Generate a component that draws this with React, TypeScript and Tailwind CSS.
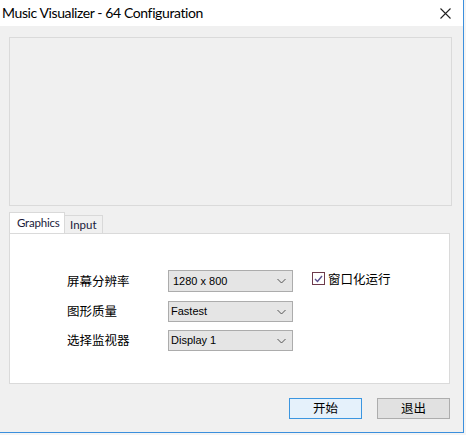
import React from "react";

const cjk = { fontFamily: '"Noto Sans CJK SC", "Noto Sans", sans-serif' };
const ui = { fontFamily: 'Lato, "Noto Sans", sans-serif' };
const tah = { fontFamily: '"Liberation Sans", Arial, sans-serif' };

function Chevron() {
  return (
    <svg width="9" height="6" viewBox="0 0 9 6" className="shrink-0">
      <polyline points="0.5,1 4.5,5 8.5,1" fill="none" stroke="#555" strokeWidth="1" />
    </svg>
  );
}

function Select({ value, h, pl }: { value: string; h: string; pl: string }) {
  return (
    <div
      className={`w-[125px] ${h} ${pl} flex items-center justify-between pr-[6px] bg-[#e5e5e5] border border-[#acacac] text-[11px] text-black`}
      style={tah}
    >
      <span>{value}</span>
      <Chevron />
    </div>
  );
}

export default function App() {
  return (
    <div className="w-[466px] h-[435px] bg-[#f4f4f4] overflow-hidden">
      <div className="w-[464px] h-[433px] border-r border-b border-[#3b8fdd] bg-[#f0f0f0] flex flex-col">
        {/* title bar */}
        <div className="h-[26px] bg-white flex items-center justify-between pl-[2px] pr-[12px] shrink-0">
          <span className="text-[14px] tracking-[-0.4px] text-black leading-none" style={ui}>
            Music Visualizer - 64 Configuration
          </span>
          <svg width="11" height="11" viewBox="0 0 11 11">
            <path d="M0.5 0.5 L10.5 10.5 M10.5 0.5 L0.5 10.5" stroke="#222" strokeWidth="1.1" fill="none" />
          </svg>
        </div>

        {/* preview panel */}
        <div className="ml-[9px] mt-[11px] w-[443px] h-[169px] border border-[#dadada] bg-[#f0f0f0] shrink-0" />

        {/* tabs */}
        <div className="ml-[9px] mt-[7px] flex items-end h-[20px] shrink-0 relative z-10">
          <div
            className="w-[56px] h-[21px] bg-white border border-b-0 border-[#d9d9d9] text-[11.5px] tracking-[-0.2px] text-[#1a1a3a] pl-[7px] pt-[1px] leading-[18px]"
            style={ui}
          >
            Graphics
          </div>
          <div
            className="w-[38px] h-[18px] bg-[#f0f0f0] border border-l-0 border-b-0 border-[#d9d9d9] text-[11.5px] text-[#1a1a3a] pl-[5px] leading-[18px]"
            style={ui}
          >
            Input
          </div>
        </div>
        <div className="ml-[9px] w-[441px] h-[151px] bg-white border border-[#dadada] shrink-0 pt-[36px] pl-[57px]">
          <div className="flex">
            <div className="flex flex-col text-[12.5px] text-black" style={cjk}>
              <div className="h-[22px] w-[101px] flex items-center">屏幕分辨率</div>
              <div className="h-[21px] mt-[9px] flex items-center">图形质量</div>
              <div className="h-[21px] mt-[8px] flex items-center">选择监视器</div>
            </div>
            <div className="flex flex-col">
              <Select value="1280 x 800" h="h-[22px]" pl="pl-[4px]" />
              <div className="mt-[9px]">
                <Select value="Fastest" h="h-[21px]" pl="pl-[2px]" />
              </div>
              <div className="mt-[8px]">
                <Select value="Display 1" h="h-[21px]" pl="pl-[2px]" />
              </div>
            </div>
            <div className="ml-[19px] mt-[2px] flex items-start">
              <div className="w-[13px] h-[13px] border border-[#6e3b4b] bg-white flex items-center justify-center">
                <svg width="9" height="8" viewBox="0 0 9 8">
                  <polyline points="1,4 3.5,6.5 8,1" fill="none" stroke="#5b4f8c" strokeWidth="1.4" />
                </svg>
              </div>
              <span className="ml-[3px] text-[12.5px] text-black leading-[13px]" style={cjk}>
                窗口化运行
              </span>
            </div>
          </div>
        </div>

        {/* buttons */}
        <div className="mt-[14px] flex pl-[289px] gap-[15px] shrink-0">
          <button
            className="w-[73px] h-[21px] border border-[#3c96e0] bg-[#e5f1fb] text-[12.5px] text-black flex items-center justify-center"
            style={cjk}
          >
            开始
          </button>
          <button
            className="w-[73px] h-[21px] border border-[#adadad] bg-[#e1e1e1] text-[12.5px] text-black flex items-center justify-center"
            style={cjk}
          >
            退出
          </button>
        </div>
      </div>
    </div>
  );
}
